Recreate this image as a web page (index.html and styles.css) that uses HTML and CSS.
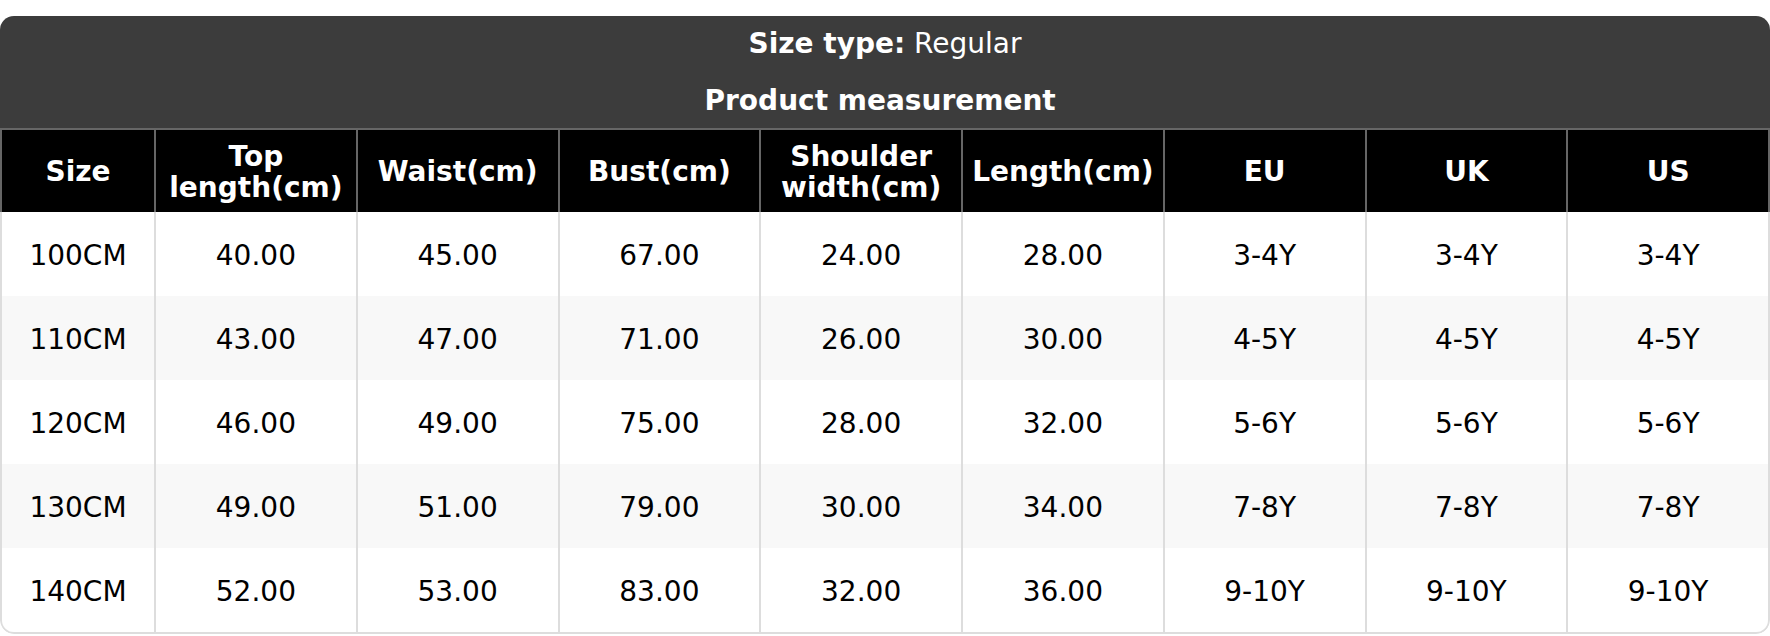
FILE: index.html
```html
<!DOCTYPE html>
<html>
<head>
<meta charset="utf-8">
<link rel="stylesheet" href="styles.css">
</head>
<body>
<div class="card">
  <div class="title">
    <div class="title-line first"><b>Size type:</b> Regular</div>
    <div class="title-line"><b>Product measurement&nbsp;</b></div>
  </div>
  <div class="head-row">
    <div class="hcell">Size</div>
    <div class="hcell">Top<br>length(cm)</div>
    <div class="hcell">Waist(cm)</div>
    <div class="hcell">Bust(cm)</div>
    <div class="hcell">Shoulder<br>width(cm)</div>
    <div class="hcell">Length(cm)</div>
    <div class="hcell">EU</div>
    <div class="hcell">UK</div>
    <div class="hcell">US</div>
  </div>
  <div class="body">
    <div class="row">
      <div class="cell">100CM</div><div class="cell">40.00</div><div class="cell">45.00</div><div class="cell">67.00</div><div class="cell">24.00</div><div class="cell">28.00</div><div class="cell">3-4Y</div><div class="cell">3-4Y</div><div class="cell">3-4Y</div>
    </div>
    <div class="row alt">
      <div class="cell">110CM</div><div class="cell">43.00</div><div class="cell">47.00</div><div class="cell">71.00</div><div class="cell">26.00</div><div class="cell">30.00</div><div class="cell">4-5Y</div><div class="cell">4-5Y</div><div class="cell">4-5Y</div>
    </div>
    <div class="row">
      <div class="cell">120CM</div><div class="cell">46.00</div><div class="cell">49.00</div><div class="cell">75.00</div><div class="cell">28.00</div><div class="cell">32.00</div><div class="cell">5-6Y</div><div class="cell">5-6Y</div><div class="cell">5-6Y</div>
    </div>
    <div class="row alt">
      <div class="cell">130CM</div><div class="cell">49.00</div><div class="cell">51.00</div><div class="cell">79.00</div><div class="cell">30.00</div><div class="cell">34.00</div><div class="cell">7-8Y</div><div class="cell">7-8Y</div><div class="cell">7-8Y</div>
    </div>
    <div class="row">
      <div class="cell">140CM</div><div class="cell">52.00</div><div class="cell">53.00</div><div class="cell">83.00</div><div class="cell">32.00</div><div class="cell">36.00</div><div class="cell">9-10Y</div><div class="cell">9-10Y</div><div class="cell">9-10Y</div>
    </div>
  </div>
</div>
</body>
</html>
```
FILE: styles.css
```css
html, body {
  margin: 0;
  padding: 0;
  background: #ffffff;
}
body {
  padding-top: 16px;
  font-family: "DejaVu Sans", sans-serif;
  font-size: 28px;
  color: #000;
}
.card {
  width: 1770px;
  border-radius: 14px;
  overflow: hidden;
}
.title {
  background: #3c3c3c;
  color: #fff;
  display: flex;
  flex-direction: column;
}
.title-line {
  height: 56px;
  display: flex;
  align-items: center;
  justify-content: center;
  white-space: pre;
}
.title-line.first {
  padding-bottom: 2px;
  box-sizing: border-box;
}
.head-row {
  display: grid;
  grid-template-columns: 152px repeat(8, 1fr);
  column-gap: 2px;
  padding: 0 2px;
  background: #666;
  border-top: 2px solid #666;
}
.hcell {
  background: #000;
  color: #fff;
  font-weight: bold;
  height: 82px;
  padding-top: 3px;
  box-sizing: border-box;
  display: flex;
  align-items: center;
  justify-content: center;
  text-align: center;
  line-height: 1.1;
}
.body {
  border: 2px solid #dddddd;
  border-top: 0;
  border-radius: 0 0 14px 14px;
  overflow: hidden;
}
.row {
  display: grid;
  grid-template-columns: 152px repeat(8, 1fr);
  column-gap: 2px;
  background: #dddddd;
}
.cell {
  background: #fff;
  height: 84px;
  padding-top: 3px;
  box-sizing: border-box;
  display: flex;
  align-items: center;
  justify-content: center;
}
.row.alt .cell {
  background: #f8f8f8;
}
```
